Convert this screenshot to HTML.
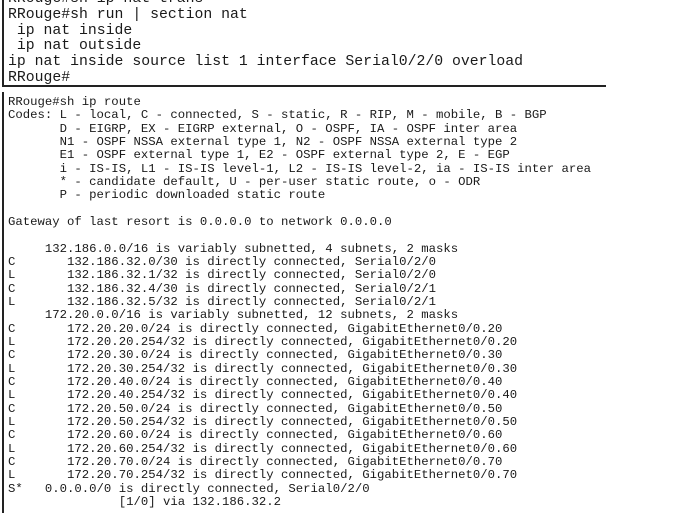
<!DOCTYPE html>
<html><head><meta charset="utf-8"><style>
html,body{margin:0;padding:0;background:#fff;width:692px;height:524px;overflow:hidden;position:relative}
pre{margin:0;position:absolute;font-family:"Liberation Mono","Courier New",monospace;color:#1a1a1a;white-space:pre}
#t{left:8px;top:-8px;font-size:14.8px;line-height:15.8px}
#b{left:8px;top:96px;font-size:12.3px;line-height:13.33px}
.l1{position:absolute;left:2px;top:0;width:2px;height:86px;background:#222}
.h1{position:absolute;left:2px;top:85px;width:604px;height:2px;background:#222}
.l2{position:absolute;left:2px;top:92px;width:2px;height:421px;background:#222}
</style></head><body>
<div class="l1"></div><div class="h1"></div><div class="l2"></div>
<pre id="t">RRouge#sh ip nat trans
RRouge#sh run | section nat
 ip nat inside
 ip nat outside
ip nat inside source list 1 interface Serial0/2/0 overload
RRouge#</pre>
<pre id="b">RRouge#sh ip route
Codes: L - local, C - connected, S - static, R - RIP, M - mobile, B - BGP
       D - EIGRP, EX - EIGRP external, O - OSPF, IA - OSPF inter area
       N1 - OSPF NSSA external type 1, N2 - OSPF NSSA external type 2
       E1 - OSPF external type 1, E2 - OSPF external type 2, E - EGP
       i - IS-IS, L1 - IS-IS level-1, L2 - IS-IS level-2, ia - IS-IS inter area
       * - candidate default, U - per-user static route, o - ODR
       P - periodic downloaded static route

Gateway of last resort is 0.0.0.0 to network 0.0.0.0

     132.186.0.0/16 is variably subnetted, 4 subnets, 2 masks
C       132.186.32.0/30 is directly connected, Serial0/2/0
L       132.186.32.1/32 is directly connected, Serial0/2/0
C       132.186.32.4/30 is directly connected, Serial0/2/1
L       132.186.32.5/32 is directly connected, Serial0/2/1
     172.20.0.0/16 is variably subnetted, 12 subnets, 2 masks
C       172.20.20.0/24 is directly connected, GigabitEthernet0/0.20
L       172.20.20.254/32 is directly connected, GigabitEthernet0/0.20
C       172.20.30.0/24 is directly connected, GigabitEthernet0/0.30
L       172.20.30.254/32 is directly connected, GigabitEthernet0/0.30
C       172.20.40.0/24 is directly connected, GigabitEthernet0/0.40
L       172.20.40.254/32 is directly connected, GigabitEthernet0/0.40
C       172.20.50.0/24 is directly connected, GigabitEthernet0/0.50
L       172.20.50.254/32 is directly connected, GigabitEthernet0/0.50
C       172.20.60.0/24 is directly connected, GigabitEthernet0/0.60
L       172.20.60.254/32 is directly connected, GigabitEthernet0/0.60
C       172.20.70.0/24 is directly connected, GigabitEthernet0/0.70
L       172.20.70.254/32 is directly connected, GigabitEthernet0/0.70
S*   0.0.0.0/0 is directly connected, Serial0/2/0
               [1/0] via 132.186.32.2</pre>
</body></html>
